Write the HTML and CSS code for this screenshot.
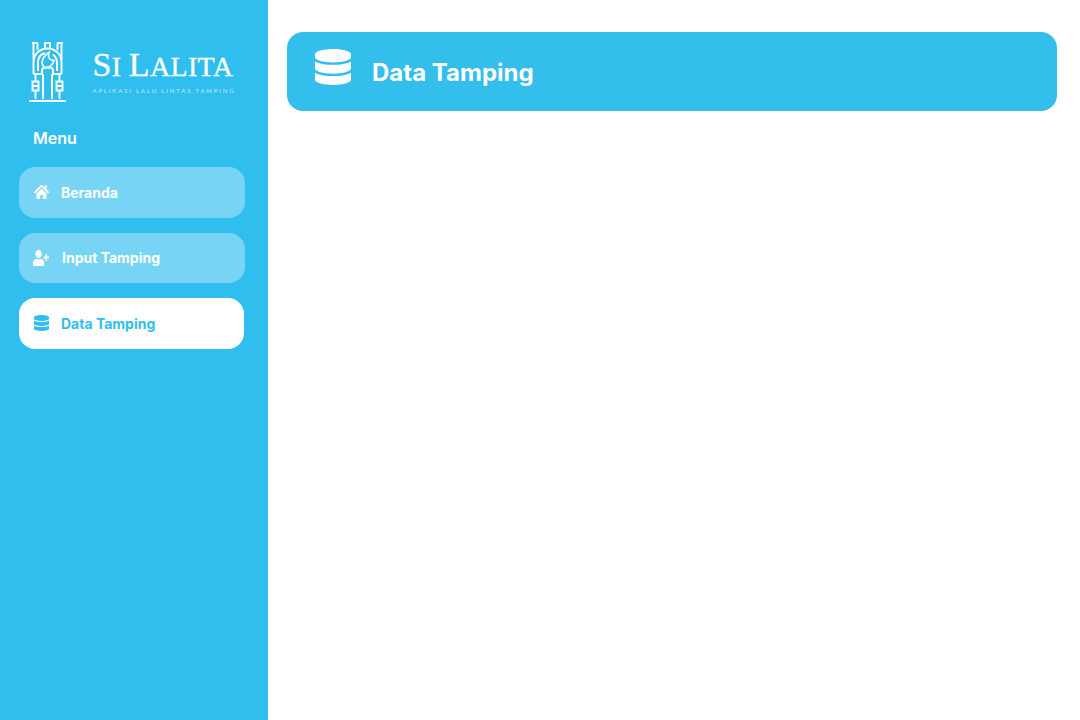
FILE: index.html
```html
<!DOCTYPE html>
<html lang="en">
<head>
<meta charset="utf-8"/>
<title>Data Tamping - Si Lalita</title>
<link rel="stylesheet" href="styles.css">
</head>
<body>
<div class="layout">
  <aside class="sidebar">
    <div class="brand">
      <svg class="brand-mark" viewBox="0 0 37 60" fill="none" stroke="#fff" stroke-width="1.9">
        <path d="M3 1H9M15 1H22M28 1H34M4.5 1V18M8.5 1V8M16 1V6M21 1V6M28.5 1V8M32.5 1V18"/>
        <path d="M4.5 32V20C4.5 12 11 6.5 18.5 6.5S32.5 12 32.5 20V32"/>
        <path d="M9 29V21C9 15 12 12 16 11M24 12.5C26.5 14.5 28 17 28 21V29"/>
        <path d="M4.5 32H13V28C13 26 15 25.5 18.5 25.5S24 26 24 28V32H32.5"/>
        <path d="M15 25C11.5 21 13 15 20 10.5C18.5 15 20.5 18.5 25 18.5C24 22.5 20 27 15 25Z" stroke-width="1.6"/>
        <path d="M6.5 32V39M6.5 49V57M14 32V57M23 32V57M30.5 32V39M30.5 49V57"/>
        <path d="M3.5 39.5H9.5V48.5H3.5ZM3.5 44H9.5M27.5 39.5H33.5V48.5H27.5ZM27.5 44H33.5"/>
        <path d="M0 59H37" stroke-width="2"/>
      </svg>
      <div class="brand-text">
        <div class="brand-name"><span class="brand-cap">S</span>I <span class="brand-cap">L</span>ALITA</div>
        <div class="brand-sub">APLIKASI LALU LINTAS TAMPING</div>
      </div>
    </div>
    <div class="menu-title">Menu</div>
    <nav class="menu">
      <a class="menu-item">
        <svg class="menu-icon" viewBox="0 0 576 512" preserveAspectRatio="none"><path d="M280.37 148.26L96 300.11V464a16 16 0 0 0 16 16l112.06-.29a16 16 0 0 0 15.92-16V368a16 16 0 0 1 16-16h64a16 16 0 0 1 16 16v95.64a16 16 0 0 0 16 16.05L464 480a16 16 0 0 0 16-16V300L295.67 148.26a12.19 12.19 0 0 0-15.3 0zM571.6 251.47L488 182.56V44.05a12 12 0 0 0-12-12h-56a12 12 0 0 0-12 12v72.61L318.47 43a48 48 0 0 0-61 0L4.34 251.47a12 12 0 0 0-1.6 16.9l25.5 31A12 12 0 0 0 45.15 301l235.22-193.74a12.19 12.19 0 0 1 15.3 0L530.9 301a12 12 0 0 0 16.9-1.6l25.5-31a12 12 0 0 0-1.7-16.93z"/></svg>
        Beranda
      </a>
      <a class="menu-item menu-item-input">
        <svg class="menu-icon" viewBox="0 0 640 512" preserveAspectRatio="none"><path d="M624 208h-64v-64c0-8.8-7.2-16-16-16h-32c-8.8 0-16 7.2-16 16v64h-64c-8.8 0-16 7.2-16 16v32c0 8.8 7.2 16 16 16h64v64c0 8.8 7.2 16 16 16h32c8.8 0 16-7.2 16-16v-64h64c8.8 0 16-7.2 16-16v-32c0-8.8-7.2-16-16-16zm-400 48c70.7 0 128-57.3 128-128S294.7 0 224 0 96 57.3 96 128s57.3 128 128 128zm89.6 32h-16.7c-22.2 10.2-46.9 16-72.9 16s-50.6-5.8-72.9-16h-16.7C60.2 288 0 348.2 0 422.4V464c0 26.5 21.5 48 48 48h352c26.5 0 48-21.5 48-48v-41.6c0-74.2-60.2-134.4-134.4-134.4z"/></svg>
        Input Tamping
      </a>
      <a class="menu-item menu-item-narrow active">
        <svg class="menu-icon" viewBox="0 0 448 512" preserveAspectRatio="none"><path d="M448 73.143v45.714C448 159.143 347.667 192 224 192S0 159.143 0 118.857V73.143C0 32.857 100.333 0 224 0s224 32.857 224 73.143zM448 176v102.857C448 319.143 347.667 352 224 352S0 319.143 0 278.857V176c48.125 33.143 136.208 48.572 224 48.572S399.875 209.143 448 176zm0 160v102.857C448 479.143 347.667 512 224 512S0 479.143 0 438.857V336c48.125 33.143 136.208 48.572 224 48.572S399.875 369.143 448 336z"/></svg>
        Data Tamping
      </a>
    </nav>
  </aside>
  <main class="content">
    <header class="page-header">
      <svg class="page-icon" viewBox="0 0 448 512" preserveAspectRatio="none"><path d="M448 73.143v45.714C448 159.143 347.667 192 224 192S0 159.143 0 118.857V73.143C0 32.857 100.333 0 224 0s224 32.857 224 73.143zM448 176v102.857C448 319.143 347.667 352 224 352S0 319.143 0 278.857V176c48.125 33.143 136.208 48.572 224 48.572S399.875 209.143 448 176zm0 160v102.857C448 479.143 347.667 512 224 512S0 479.143 0 438.857V336c48.125 33.143 136.208 48.572 224 48.572S399.875 369.143 448 336z"/></svg>
      <h1>Data Tamping</h1>
    </header>
  </main>
</div>
</body>
</html>
```

FILE: styles.css
```css
* {
  box-sizing: border-box;
}
body {
  margin: 0;
  font-family: 'Inter', sans-serif;
  background: white;
}
.layout {
  display: flex;
  height: 720px;
}
.sidebar {
  width: 268px;
  flex-shrink: 0;
  background: #2fbeee;
  padding: 42px 23px 0 19px;
}
.brand {
  display: flex;
  align-items: flex-start;
  height: 60px;
  padding-left: 10px;
}
.brand-mark {
  width: 37px;
  height: 60px;
  flex-shrink: 0;
}
.brand-text {
  margin-left: 26.5px;
  color: white;
  white-space: nowrap;
}
.brand-name {
  font-family: 'Liberation Serif', serif;
  font-size: 28px;
  line-height: 46px;
  letter-spacing: 0.35px;
  -webkit-text-stroke: 0.3px white;
}
.brand-cap {
  font-size: 34px;
}
.brand-sub {
  margin-top: -3px;
  font-family: 'Lato', sans-serif;
  font-size: 6px;
  line-height: 8px;
  letter-spacing: 1.85px;
  opacity: 0.7;
}
.menu-title {
  margin: 26px 0 19.3px 14px;
  color: white;
  font-size: 16px;
  font-weight: 600;
  line-height: 20px;
}
.menu {
  display: flex;
  flex-direction: column;
  gap: 15.1px;
}
.menu-item {
  display: flex;
  align-items: center;
  gap: 12px;
  height: 50.4px;
  padding-left: 15px;
  border-radius: 16px;
  background: rgba(255, 255, 255, 0.35);
  color: white;
  font-size: 14px;
  font-weight: 700;
}
.menu-item-input {
  margin-right: 0.5px;
  padding-left: 14px;
}
.menu-item-input .menu-icon {
  width: 16px;
  margin-right: 1px;
}
.menu-item-narrow {
  margin-right: 1px;
}
.menu-item.active {
  background: white;
  color: #2fbeee;
}
.menu-icon {
  width: 15px;
  height: 16px;
  fill: currentColor;
  flex-shrink: 0;
}
.content {
  flex: 1;
  padding: 32px 23px 0 19px;
}
.page-header {
  display: flex;
  align-items: center;
  gap: 21px;
  height: 79px;
  padding: 2px 0 0 28px;
  border-radius: 16px;
  background: #33beec;
  color: white;
}
.page-icon {
  width: 36px;
  height: 36px;
  margin-top: -11px;
  fill: white;
  flex-shrink: 0;
}
.page-header h1 {
  margin: 0;
  font-size: 24px;
  font-weight: 700;
  line-height: 30px;
}
```
